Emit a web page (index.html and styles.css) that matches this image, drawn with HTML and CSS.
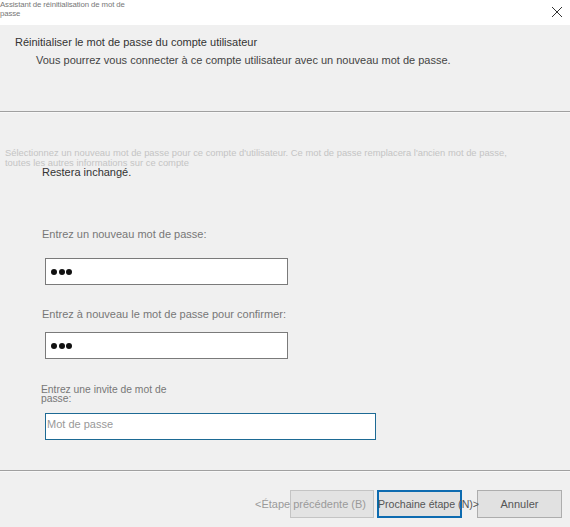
FILE: index.html
```html
<!DOCTYPE html>
<html lang="fr">
<head>
<meta charset="utf-8">
<title>Assistant de réinitialisation de mot de passe</title>
<link rel="stylesheet" href="styles.css">
</head>
<body>
<div class="window">
  <div class="titlebar">
    <div class="wintitle">Assistant de réinitialisation de mot de<br>passe</div>
    <svg class="close" width="12" height="12" viewBox="0 0 12 12"><path d="M1 1 L11 11 M11 1 L1 11" stroke="#333" stroke-width="1" fill="none"/></svg>
  </div>
  <div class="header">
    <div class="h-title">Réinitialiser le mot de passe du compte utilisateur</div>
    <div class="h-sub">Vous pourrez vous connecter à ce compte utilisateur avec un nouveau mot de passe.</div>
  </div>
  <div class="sep"></div>
  <div class="content">
    <div class="faded">Sélectionnez un nouveau mot de passe pour ce compte d'utilisateur. Ce mot de passe remplacera l'ancien mot de passe,<br>toutes les autres informations sur ce compte</div>
    <div class="unchanged">Restera inchangé.</div>
    <div class="label l1">Entrez un nouveau mot de passe:</div>
    <div class="field f1"><span class="dot"></span><span class="dot"></span><span class="dot"></span></div>
    <div class="label l2">Entrez à nouveau le mot de passe pour confirmer:</div>
    <div class="field f2"><span class="dot"></span><span class="dot"></span><span class="dot"></span></div>
    <div class="label-small">Entrez une invite de mot de<br>passe:</div>
    <div class="field hint"><span class="placeholder">Mot de passe</span></div>
  </div>
  <div class="sep bottom"></div>
  <div class="footer">
    <div class="btn prev"><span>&lt;Étape précédente (B)</span></div>
    <div class="btn next"><span>Prochaine étape (N)&gt;</span></div>
    <div class="btn cancel"><span>Annuler</span></div>
  </div>
</div>
</body>
</html>
```

FILE: styles.css
```css
html, body {
  margin: 0;
  padding: 0;
  background: #f0f0f0;
}
body {
  font-family: "Liberation Sans", Arial, sans-serif;
  color: #444;
}
.window {
  width: 570px;
  height: 527px;
  background: #f0f0f0;
  display: flex;
  flex-direction: column;
  overflow: hidden;
}
.titlebar {
  height: 25px;
  background: #fff;
  display: flex;
  justify-content: space-between;
  align-items: flex-start;
  flex: none;
}
.wintitle {
  font-size: 7.8px;
  line-height: 9px;
  color: #777;
  letter-spacing: -0.1px;
}
.close {
  margin: 6px 7px 0 0;
}
.header {
  height: 86px;
  flex: none;
  box-sizing: border-box;
  padding-top: 11px;
}
.h-title {
  font-size: 11px;
  line-height: 13px;
  color: #333;
  padding-left: 15px;
}
.h-sub {
  font-size: 11px;
  line-height: 13px;
  color: #444;
  padding-left: 36px;
  margin-top: 5px;
}
.sep {
  height: 1px;
  background: #a0a0a0;
  border-bottom: 1px solid #f8f8f8;
  flex: none;
}
.content {
  height: 357px;
  flex: none;
  box-sizing: border-box;
  padding-top: 35px;
}
.faded {
  font-size: 9.4px;
  line-height: 10px;
  color: #c4c4c4;
  padding-left: 5px;
  white-space: nowrap;
}
.unchanged {
  font-size: 11px;
  line-height: 13px;
  color: #333;
  padding-left: 42px;
  margin-top: -2px;
}
.label {
  font-size: 11px;
  line-height: 13px;
  color: #777;
  padding-left: 42px;
}
.l1 { margin-top: 49px; }
.l2 { margin-top: 23px; }
.field {
  margin-left: 45px;
  width: 243px;
  height: 27px;
  box-sizing: border-box;
  border: 1px solid #7a7a7a;
  background: #fff;
  display: flex;
  align-items: center;
  padding-left: 5px;
  gap: 1.5px;
}
.f1 { margin-top: 17px; }
.f2 { margin-top: 11px; }
.dot {
  width: 6px;
  height: 6px;
  border-radius: 50%;
  background: #111;
}
.label-small {
  font-size: 10.3px;
  line-height: 9px;
  color: #777;
  padding-left: 41px;
  margin-top: 26px;
}
.field.hint {
  width: 331px;
  margin-top: 10px;
  border-color: #1d6a94;
  padding-left: 1px;
  align-items: flex-start;
  padding-top: 4px;
}
.placeholder {
  font-size: 11px;
  color: #999;
}
.footer {
  display: flex;
  padding: 18px 0 0 290px;
  gap: 3px;
}
.btn {
  width: 84px;
  height: 28px;
  box-sizing: border-box;
  border: 1px solid #adadad;
  background: #e1e1e1;
  font-size: 11px;
  color: #555;
  display: flex;
  align-items: center;
  justify-content: center;
  white-space: nowrap;
}
.btn span { display: block; }
.prev {
  border-color: #c4c4c4;
  background: #e3e3e3;
  color: #9a9a9a;
  justify-content: flex-end;
  padding-right: 7px;
}
.next {
  width: 85px;
  border: 2px solid #0d6bb0;
  justify-content: flex-start;
  font-size: 10.6px;
  position: relative;
  z-index: 1;
}
.next span { margin-left: -1px; }
.cancel {
  margin-left: 12px;
  width: 85px;
}
```
